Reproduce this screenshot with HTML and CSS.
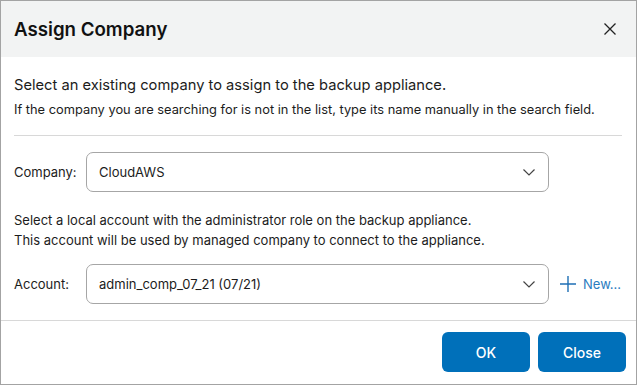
FILE: index.html
```html
<!DOCTYPE html>
<html>
<head>
<meta charset="utf-8">
<link rel="stylesheet" href="styles.css">
</head>
<body>
<div class="dialog">
  <div class="header">
    <div class="title">Assign Company</div>
    <button class="close-x" aria-label="Close">
      <svg width="12" height="12" viewBox="0 0 12 12"><path d="M0.5 0.5 L11.5 11.5 M11.5 0.5 L0.5 11.5" stroke="#222" stroke-width="1.3" fill="none"/></svg>
    </button>
  </div>
  <div class="body">
    <div class="intro">
      <div class="lead">Select an existing company to assign to the backup appliance.</div>
      <div class="sub">If the company you are searching for is not in the list, type its name manually in the search field.</div>
    </div>
    <div class="sep"></div>
    <div class="row">
      <div class="label">Company:</div>
      <div class="select">
        <span>CloudAWS</span>
        <svg class="chev" width="12" height="7" viewBox="0 0 12 7"><path d="M0.5 0.5 L6 6 L11.5 0.5" stroke="#444" stroke-width="1.2" fill="none"/></svg>
      </div>
    </div>
    <div class="note">Select a local account with the administrator role on the backup appliance.<br>This account will be used by managed company to connect to the appliance.</div>
    <div class="row">
      <div class="label">Account:</div>
      <div class="select">
        <span>admin_comp_07_21 (07/21)</span>
        <svg class="chev" width="12" height="7" viewBox="0 0 12 7"><path d="M0.5 0.5 L6 6 L11.5 0.5" stroke="#444" stroke-width="1.2" fill="none"/></svg>
      </div>
      <div class="new">
        <svg width="16" height="16" viewBox="0 0 16 16"><path d="M8 0 V16 M0 8 H16" stroke="#1f6fb5" stroke-width="1.4" fill="none"/></svg>
        <span>New...</span>
      </div>
    </div>
  </div>
  <div class="footer">
    <button class="btn">OK</button>
    <button class="btn">Close</button>
  </div>
</div>
</body>
</html>
```
FILE: styles.css
```css
* { box-sizing: border-box; }
html, body { margin: 0; padding: 0; background: #fff; }
body {
  font-family: Inter, "Noto Sans", sans-serif;
  color: #1c1c1c;
  width: 637px;
  height: 385px;
}
.dialog {
  width: 637px;
  height: 385px;
  border: 1px solid #a3a3a3;
  display: flex;
  flex-direction: column;
  background: #fff;
}
.header {
  height: 56px;
  background: #f2f3f3;
  display: flex;
  align-items: center;
  justify-content: space-between;
  padding: 0 20px 0 13px;
  flex-shrink: 0;
}
.title {
  font-size: 18.7px;
  font-weight: 600;
  color: #111;
}
.close-x {
  border: 0;
  background: none;
  padding: 0;
  width: 12px;
  height: 12px;
  display: flex;
}
.body {
  padding: 0 13px;
  flex: 1;
}
.intro { padding-top: 18px; }
.lead { font-size: 14.7px; line-height: 20px; }
.sub { font-size: 12.85px; line-height: 18px; margin-top: 6px; }
.sep { height: 1px; background: #d8d8d8; margin-top: 16px; margin-right: 1px; }
.row {
  display: flex;
  align-items: center;
  margin-top: 16px;
}
.label { width: 72px; font-size: 13px; }
.select {
  width: 463px;
  height: 40px;
  border: 1px solid #a6a6a6;
  border-radius: 7px;
  display: flex;
  align-items: center;
  justify-content: space-between;
  padding: 0 13px 0 12px;
  font-size: 13px;
}
.note { font-size: 13px; line-height: 20px; margin-top: 18px; }
.note + .row { margin-top: 14px; }
.new {
  display: flex;
  align-items: center;
  gap: 7px;
  margin-left: 11px;
  color: #2a7cc0;
  font-size: 13px;
}
.footer {
  border-top: 1px solid #d8d8d8;
  height: 64px;
  display: flex;
  justify-content: flex-end;
  align-items: flex-start;
  gap: 8px;
  padding: 11px 10px 0 0;
  flex-shrink: 0;
}
.btn {
  width: 88px;
  height: 40px;
  border: 0;
  border-radius: 6px;
  background: #0070ba;
  color: #fff;
  font-family: Inter, "Noto Sans", sans-serif;
  font-size: 14px;
  font-weight: 500;
}
```
